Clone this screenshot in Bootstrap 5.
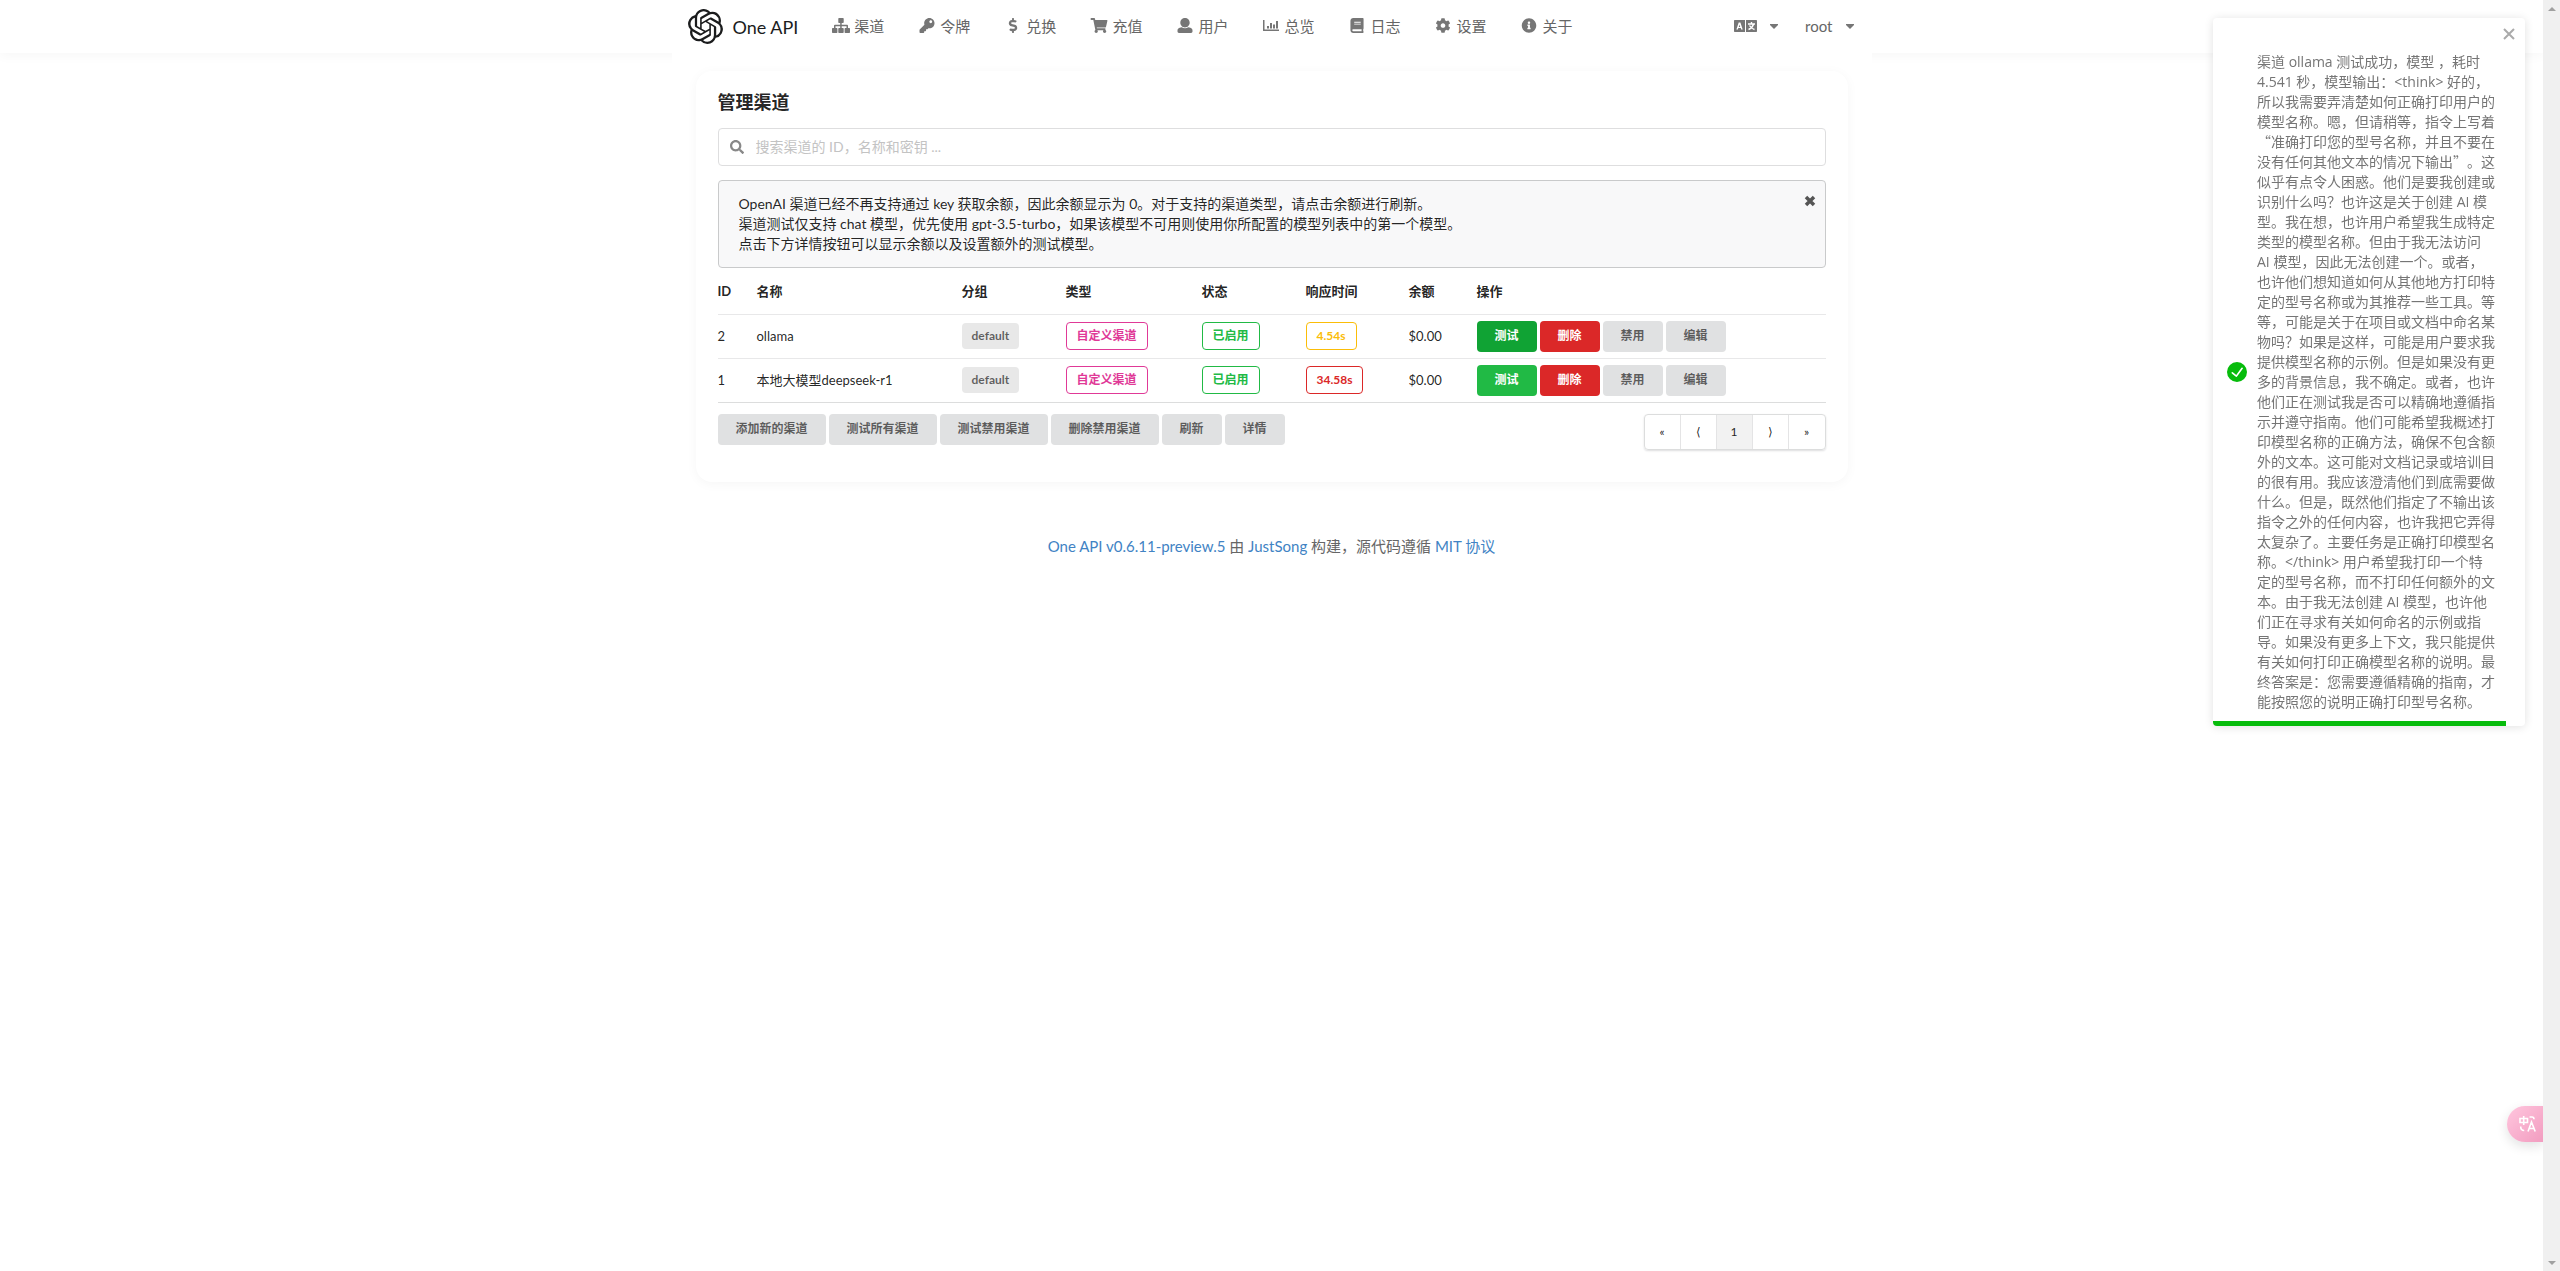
<!DOCTYPE html>
<html lang="zh-CN">
<head>
<meta charset="utf-8">
<meta name="viewport" content="width=device-width, initial-scale=1">
<title>One API</title>
<link href="https://cdn.jsdelivr.net/npm/bootstrap@5.3.0/dist/css/bootstrap.min.css" rel="stylesheet">
<script src="https://cdn.jsdelivr.net/npm/bootstrap@5.3.0/dist/js/bootstrap.bundle.min.js" defer></script>
<style>
body{font-family:Lato,"Noto Sans CJK SC",sans-serif;font-size:14px;line-height:20px;color:rgba(0,0,0,.87);background:#fff;padding-right:17px}
a{text-decoration:none;color:#4183c4}
svg{display:block;fill:currentColor}
.wrap{max-width:1200px;margin:0 auto}
.topbar{height:53px;padding:0;background:#fff;box-shadow:0 2px 12px rgba(0,0,0,.04)}
.topbar .wrap{height:53px;padding:0 16px}
.brand{gap:10px;color:#1b1c1d;font-size:18px}
.menu{margin-left:17px;font-size:15px;padding-bottom:2px}
.menu a,.userbar button{color:#666}
.menu svg,.userbar svg{color:#767676}
.menu a{gap:4px;padding:0 17px}
.glyph{width:18px;height:15px}
.userbar{gap:27px;font-size:15px;padding:0 2px 1px 0}
.userbar button{gap:13px;border:0;background:none;padding:0}
.panel{border:0;border-radius:16px;padding:20px 22px 32px;box-shadow:0 2px 12px rgba(0,0,0,.04)}
.page-main{background:#fff;position:relative;padding:18px 24px 0}
.panel h1{font-size:18px;line-height:22px;font-weight:700;margin:0 0 15px}
.finder{height:38px;border:1px solid #dededf;border-radius:4px;padding:0 11px;gap:12px;color:#888}
.finder input{border:0;outline:0;padding:0;background:none;font-size:14px}
.finder input::placeholder{color:#c3c3c3;opacity:1}
.notice{margin-top:14px;padding:13px 9px 13px 20px;background:#f8f8f9;border:1px solid #c9cacb;border-radius:4px}
.notice button{border:0;background:none;padding:1px 0 0;color:#555}
.grid-table{table-layout:fixed;width:100%;font-size:13px}
.grid-table th{height:46px;padding:0;font-weight:700}
.grid-table td{height:44px;padding:0}
.grid-table tr{border-bottom:1px solid #e8e8e9}
.grid-table tbody tr:last-child{border-color:#dcdddd}
.tag{display:inline-block;font-size:12px;line-height:12px;font-weight:700;border:1px solid;border-radius:4px;padding:7px 10px;vertical-align:middle}
.tag-fill{background:#e8e8e8;color:rgba(0,0,0,.6);border:0}
.pink{color:#e03997}.green{color:#21ba45}.yellow{color:#fbbd08}.red{color:#db2828}
.act{border:0;border-radius:4px;height:31px;padding:0 18px;font-size:12px;line-height:12px;font-weight:700;background:#e0e1e2;color:rgba(0,0,0,.6)}
.act-go{background:#21ba45;color:#fff}.act-on{background:#10a334;color:#fff}.act-del{background:#db2828;color:#fff}
.btns{gap:3px}
.under{padding-top:11px}
.pager{border:1px solid #dcdddd;border-radius:4px;box-shadow:0 1px 2px rgba(34,36,38,.15);overflow:hidden;font-size:12px}
.pager a{width:36px;height:34px;color:rgba(0,0,0,.87);border-right:1px solid #e4e4e5}
.pager a:last-child{border:0}.pager .on{background:#f2f2f2}
.foot{margin-top:54px;font-size:15px;color:#666}
.note{position:fixed;top:18px;right:35px;width:312px;height:708px;background:#fff;border-radius:4px;box-shadow:0 1px 10px rgba(0,0,0,.12);overflow:hidden;padding:0 14px;gap:10px;color:#757575;font-family:"Open Sans","Noto Sans CJK SC",sans-serif;font-size:14px}
.note p{margin:0;padding-top:20px;white-space:nowrap;text-spacing-trim:space-all}
.note .tick{fill:#07bc0c}
.note .q{font-family:"Noto Sans CJK SC",sans-serif;line-height:1}
.note .shut{position:absolute;top:10px;right:10px;border:0;background:none;padding:0;color:#aaa}
.note .bar{position:absolute;left:0;bottom:0;height:5px;background:#07bc0c}
.trans{position:fixed;right:17px;bottom:129px;width:36px;height:36px;border:0;border-radius:18px 0 0 18px;background:linear-gradient(135deg,#ffc6de,#f29dc0);box-shadow:0 4px 12px rgba(0,20,20,.12);color:#fff;padding:0 0 0 11px}
.rail{position:fixed;top:0;right:0;bottom:0;width:17px;background:#f0f0f0;color:#a0a0a0;padding:7px 0 6px}
</style>
</head>
<body>
<nav class="topbar">
<div class="wrap d-flex align-items-center">
<a href="#" class="brand d-flex align-items-center"><svg width="35" height="35" viewBox="0 0 24 24"><path d="M22.2819 9.8211a5.9847 5.9847 0 0 0-.5157-4.9108 6.0462 6.0462 0 0 0-6.5098-2.9A6.0651 6.0651 0 0 0 4.9807 4.1818a5.9847 5.9847 0 0 0-3.9977 2.9 6.0462 6.0462 0 0 0 .7427 7.0966 5.98 5.98 0 0 0 .511 4.9107 6.051 6.051 0 0 0 6.5146 2.9001A5.9847 5.9847 0 0 0 13.2599 24a6.0557 6.0557 0 0 0 5.7718-4.2058 5.9894 5.9894 0 0 0 3.9977-2.9001 6.0557 6.0557 0 0 0-.7475-7.0729zm-9.022 12.6081a4.4755 4.4755 0 0 1-2.8764-1.0408l.1419-.0804 4.7783-2.7582a.7948.7948 0 0 0 .3927-.6813v-6.7369l2.02 1.1686a.071.071 0 0 1 .038.052v5.5826a4.504 4.504 0 0 1-4.4945 4.4944zm-9.6607-4.1254a4.4708 4.4708 0 0 1-.5346-3.0137l.142.0852 4.783 2.7582a.7712.7712 0 0 0 .7806 0l5.8428-3.3685v2.3324a.0804.0804 0 0 1-.0332.0615L9.74 19.9502a4.4992 4.4992 0 0 1-6.1408-1.6464zM2.3408 7.8956a4.485 4.485 0 0 1 2.3655-1.9728V11.6a.7664.7664 0 0 0 .3879.6765l5.8144 3.3543-2.0201 1.1685a.0757.0757 0 0 1-.071 0l-4.8303-2.7865A4.504 4.504 0 0 1 2.3408 7.872zm16.5963 3.8558L13.1038 8.364 15.1192 7.2a.0757.0757 0 0 1 .071 0l4.8303 2.7913a4.4944 4.4944 0 0 1-.6765 8.1042v-5.6772a.79.79 0 0 0-.407-.667zm2.0107-3.0231l-.142-.0852-4.7735-2.7818a.7759.7759 0 0 0-.7854 0L9.409 9.2297V6.8974a.0662.0662 0 0 1 .0284-.0615l4.8303-2.7866a4.4992 4.4992 0 0 1 6.6802 4.66zM8.3065 12.863l-2.02-1.1638a.0804.0804 0 0 1-.038-.0567V6.0742a4.4992 4.4992 0 0 1 7.3757-3.4537l-.142.0805L8.704 5.459a.7948.7948 0 0 0-.3927.6813zm1.0976-2.3654l2.602-1.4998 2.6069 1.4998v2.9994l-2.5974 1.4997-2.6067-1.4997Z"/></svg><span>One API</span></a>
<div class="menu d-flex align-items-center">
<a href="#" class="d-flex align-items-center"><svg class="glyph" viewBox="0 0 18 15"><path d="M7 0h4q.7 0 .7.7v3.6q0 .7-.7.7H9.700v1.700h5.300q1 0 1 1V10h1.300q.7 0 .7.7v3.600q0 .7-.7.7h-4q-.7 0-.7-.7v-3.600q0-.7.7-.7h1.200V8.200H9.700V10H11q.7 0 .7.7v3.600q0 .7-.7.7H7q-.7 0-.7-.7v-3.600q0-.7.7-.7h1.200V8.200H3.500V10h1.200q.7 0 .7.7v3.600q0 .7-.7.7h-4Q0 15 0 14.300v-3.600Q0 10 .7 10H2V7.700q0-1 1-1h5.200V5H7q-.7 0-.7-.7V.7Q6.300 0 7 0z"/></svg>渠道</a>
<a href="#" class="d-flex align-items-center"><svg class="glyph" viewBox="0 0 512 512"><path d="M512 176.001C512 273.203 433.202 352 336 352c-11.220 0-22.190-1.062-32.827-3.069l-24.012 27.014A23.999 23.999 0 0 1 261.223 384H224v40c0 13.255-10.745 24-24 24h-40v40c0 13.255-10.745 24-24 24H24c-13.255 0-24-10.745-24-24v-78.059c0-6.365 2.529-12.470 7.029-16.971l161.802-161.802C163.108 213.814 160 195.271 160 176 160 78.798 238.797.001 335.999 0 433.488-.001 512 78.511 512 176.001zM336 128c0 26.510 21.490 48 48 48s48-21.490 48-48-21.490-48-48-48-48 21.490-48 48z"/></svg>令牌</a>
<a href="#" class="d-flex align-items-center"><svg class="glyph" viewBox="0 0 288 512"><path d="M209.2 233.4l-108-31.6C88.7 198.2 80 186.5 80 173.5c0-16.3 13.2-29.5 29.5-29.5h66.3c12.2 0 24.2 3.7 34.2 10.5 6.1 4.1 14.3 3.1 19.5-2l34.8-34c7.1-6.9 6.1-18.4-1.8-24.5C238 74.8 207.4 64.1 176 64V16c0-8.8-7.2-16-16-16h-32c-8.8 0-16 7.2-16 16v48h-2.5C45.8 64-5.4 118.7.5 183.6c4.2 46.1 39.4 83.6 83.8 96.6l102.5 30c12.5 3.7 21.2 15.3 21.2 28.3 0 16.3-13.2 29.5-29.5 29.5h-66.3C100 368 88 364.3 78 357.5c-6.1-4.1-14.3-3.1-19.5 2l-34.8 34c-7.1 6.9-6.1 18.4 1.8 24.5 24.5 19.2 55.1 29.9 86.5 30v48c0 8.8 7.2 16 16 16h32c8.8 0 16-7.2 16-16v-48.2c46.6-.9 90.3-28.6 105.7-72.7 21.5-61.6-14.6-124.8-72.5-141.7z"/></svg>兑换</a>
<a href="#" class="d-flex align-items-center"><svg class="glyph" viewBox="0 0 576 512"><path d="M528.12 301.319l47.273-208C578.806 78.301 567.391 64 551.99 64H159.208l-9.166-44.81C147.758 8.021 137.93 0 126.529 0H24C10.745 0 0 10.745 0 24v16c0 13.255 10.745 24 24 24h69.883l70.248 343.435C147.325 417.1 136 435.222 136 456c0 30.928 25.072 56 56 56s56-25.072 56-56c0-15.674-6.447-29.835-16.824-40h209.647C430.447 426.165 424 440.326 424 456c0 30.928 25.072 56 56 56s56-25.072 56-56c0-22.172-12.888-41.332-31.579-50.405l5.517-24.276c3.413-15.018-8.002-29.319-23.403-29.319H218.117l-6.545-32h293.145c11.206 0 20.92-7.754 23.403-18.681z"/></svg>充值</a>
<a href="#" class="d-flex align-items-center"><svg class="glyph" viewBox="0 0 512 512"><path d="M256 0c88.366 0 160 71.634 160 160s-71.634 160-160 160S96 248.366 96 160 167.634 0 256 0zm183.283 333.821l-71.313-17.828c-74.923 53.89-165.738 41.864-223.94 0l-71.313 17.828C29.981 344.505 0 382.903 0 426.955V464c0 26.51 21.49 48 48 48h416c26.51 0 48-21.49 48-48v-37.045c0-44.052-29.981-82.45-72.717-93.134z"/></svg>用户</a>
<a href="#" class="d-flex align-items-center"><svg class="glyph" viewBox="0 0 16 15"><path d="M0 2h1.500v9.500H16V13H.5Q0 13 0 12.500zM4 8h2v2.500H4zM7 5h2v5.500H7zM10 6.500h2v4h-2zM13 3h2v7.500h-2z"/></svg>总览</a>
<a href="#" class="d-flex align-items-center"><svg class="glyph" viewBox="0 0 448 512"><path fill-rule="evenodd" d="M448 360V24c0-13.300-10.700-24-24-24H96C43 0 0 43 0 96v320c0 53 43 96 96 96h328c13.300 0 24-10.700 24-24v-16c0-7.500-3.500-14.300-8.900-18.700-4.200-15.400-4.200-59.300 0-74.700 5.400-4.300 8.900-11.100 8.900-18.600zM128 134c0-3.300 2.700-6 6-6h212c3.300 0 6 2.700 6 6v20c0 3.300-2.700 6-6 6H134c-3.300 0-6-2.700-6-6v-20zm0 64c0-3.300 2.700-6 6-6h212c3.300 0 6 2.700 6 6v20c0 3.300-2.700 6-6 6H134c-3.300 0-6-2.700-6-6v-20zm253.400 250H96c-17.700 0-32-14.300-32-32 0-17.600 14.400-32 32-32h285.400c-1.900 17.100-1.900 46.900 0 64z"/></svg>日志</a>
<a href="#" class="d-flex align-items-center"><svg class="glyph" viewBox="0 0 512 512"><path d="M487.4 315.7l-42.6-24.6c4.3-23.2 4.3-47 0-70.2l42.6-24.6c4.9-2.8 7.1-8.6 5.5-14-11.1-35.6-30-67.8-54.7-94.6-3.8-4.1-10-5.1-14.8-2.3L380.8 110c-17.9-15.4-38.5-27.3-60.8-35.1V25.8c0-5.6-3.9-10.5-9.4-11.7-36.7-8.2-74.3-7.8-109.2 0-5.5 1.2-9.4 6.1-9.4 11.7V75c-22.2 7.9-42.8 19.8-60.8 35.1L88.7 85.5c-4.9-2.8-11-1.9-14.8 2.3-24.7 26.7-43.6 58.9-54.7 94.6-1.7 5.4.6 11.2 5.5 14L67.3 221c-4.3 23.2-4.3 47 0 70.2l-42.6 24.6c-4.9 2.8-7.1 8.6-5.5 14 11.1 35.6 30 67.8 54.7 94.6 3.8 4.1 10 5.1 14.8 2.3l42.6-24.6c17.9 15.4 38.5 27.3 60.8 35.1v49.2c0 5.6 3.9 10.5 9.4 11.7 36.7 8.2 74.3 7.8 109.2 0 5.5-1.2 9.4-6.1 9.4-11.7v-49.2c22.2-7.9 42.8-19.8 60.8-35.1l42.6 24.6c4.9 2.8 11 1.9 14.8-2.3 24.7-26.7 43.6-58.9 54.7-94.6 1.5-5.5-.7-11.3-5.6-14.1zM256 336c-44.1 0-80-35.9-80-80s35.9-80 80-80 80 35.9 80 80-35.9 80-80 80z"/></svg>设置</a>
<a href="#" class="d-flex align-items-center"><svg class="glyph" viewBox="0 0 512 512"><path d="M256 8C119.043 8 8 119.083 8 256c0 136.997 111.043 248 248 248s248-111.003 248-248C504 119.083 392.957 8 256 8zm0 110c23.196 0 42 18.804 42 42s-18.804 42-42 42-42-18.804-42-42 18.804-42 42-42zm56 254c0 6.627-5.373 12-12 12h-88c-6.627 0-12-5.373-12-12v-24c0-6.627 5.373-12 12-12h12v-64h-12c-6.627 0-12-5.373-12-12v-24c0-6.627 5.373-12 12-12h64c6.627 0 12 5.373 12 12v100h12c6.627 0 12 5.373 12 12v24z"/></svg>关于</a>
</div>
<div class="userbar d-flex align-items-center ms-auto">
<button type="button" class="d-flex align-items-center" aria-label="语言"><svg width="23" height="12" viewBox="0 0 23 12"><path fill-rule="evenodd" d="M.7 0H11v12H.7Q0 12 0 11.300V.7Q0 0 .7 0zM12 0h10.300q.7 0 .7.700v10.600q0 .7-.7.700H12zM4.700 2.500 2.400 9.500h1.500l.4-1.400h2.500l.4 1.400h1.500L6.400 2.500zm.8 1.900.7 2.500H4.800z"/><path d="M17.500 2v1.700M14 4h7M19.500 4.300Q18.500 8 14.500 9.500M15.500 5.500Q17 8.500 20.500 9.500" fill="none" stroke="#fff" stroke-width="1.400"/></svg><svg width="8" height="5"><path d="M0 0h8v1L4 5 0 1z"/></svg></button>
<button type="button" class="d-flex align-items-center">root<svg width="8" height="5"><path d="M0 0h8v1L4 5 0 1z"/></svg></button>
</div>
</div>
</nav>
<main class="wrap page-main">
<section class="card panel">
<h1>管理渠道</h1>
<label class="finder d-flex align-items-center"><svg width="14" height="14" viewBox="0 0 512 512"><path d="M505 442.7L405.3 343c-4.5-4.5-10.6-7-17-7H372c27.6-35.3 44-79.7 44-128C416 93.1 322.9 0 208 0S0 93.1 0 208s93.1 208 208 208c48.3 0 92.7-16.4 128-44v16.3c0 6.4 2.5 12.5 7 17l99.7 99.7c9.4 9.4 24.6 9.4 33.9 0l28.3-28.3c9.4-9.4 9.4-24.6.1-34zM208 336c-70.7 0-128-57.2-128-128 0-70.7 57.2-128 128-128 70.7 0 128 57.2 128 128 0 70.7-57.2 128-128 128z"/></svg><input class="flex-grow-1" type="text" aria-label="搜索渠道" placeholder="搜索渠道的 ID，名称和密钥 ..."></label>
<div class="notice d-flex justify-content-between align-items-start">
<div>OpenAI 渠道已经不再支持通过 key 获取余额，因此余额显示为 0。对于支持的渠道类型，请点击余额进行刷新。<br>渠道测试仅支持 chat 模型，优先使用 gpt-3.5-turbo，如果该模型不可用则使用你所配置的模型列表中的第一个模型。<br>点击下方详情按钮可以显示余额以及设置额外的测试模型。</div>
<button type="button" aria-label="关闭"><svg width="12" height="12" viewBox="0 0 12 12"><path d="M2 2l8 8M10 2l-8 8" stroke="currentColor" stroke-width="3.500"/></svg></button>
</div>
<table class="grid-table">
<colgroup><col width="39"><col width="205"><col width="104"><col width="136"><col width="104"><col width="103"><col width="68"><col></colgroup>
<thead><tr><th>ID</th><th>名称</th><th>分组</th><th>类型</th><th>状态</th><th>响应时间</th><th>余额</th><th>操作</th></tr></thead>
<tbody>
<tr><td>2</td><td>ollama</td><td><span class="tag tag-fill">default</span></td><td><span class="tag pink">自定义渠道</span></td><td><span class="tag green">已启用</span></td><td><span class="tag yellow">4.54s</span></td><td>$0.00</td><td><div class="btns d-flex"><button type="button" class="act act-on">测试</button><button type="button" class="act act-del">删除</button><button type="button" class="act">禁用</button><button type="button" class="act">编辑</button></div></td></tr>
<tr><td>1</td><td>本地大模型deepseek-r1</td><td><span class="tag tag-fill">default</span></td><td><span class="tag pink">自定义渠道</span></td><td><span class="tag green">已启用</span></td><td><span class="tag red">34.58s</span></td><td>$0.00</td><td><div class="btns d-flex"><button type="button" class="act act-go">测试</button><button type="button" class="act act-del">删除</button><button type="button" class="act">禁用</button><button type="button" class="act">编辑</button></div></td></tr>
</tbody>
</table>
<div class="under d-flex justify-content-between align-items-start">
<div class="btns d-flex"><button type="button" class="act">添加新的渠道</button><button type="button" class="act">测试所有渠道</button><button type="button" class="act">测试禁用渠道</button><button type="button" class="act">删除禁用渠道</button><button type="button" class="act">刷新</button><button type="button" class="act">详情</button></div>
<div class="pager d-flex"><a href="#" class="d-flex align-items-center justify-content-center">«</a><a href="#" class="d-flex align-items-center justify-content-center">⟨</a><a href="#" class="on d-flex align-items-center justify-content-center">1</a><a href="#" class="d-flex align-items-center justify-content-center">⟩</a><a href="#" class="d-flex align-items-center justify-content-center">»</a></div>
</div>
</section>
<footer class="foot text-center"><a href="#">One API v0.6.11-preview.5</a> 由 <a href="#">JustSong</a> 构建，源代码遵循 <a href="#">MIT 协议</a></footer>
</main>
<div class="note d-flex align-items-center" role="alert">
<svg class="tick flex-shrink-0" width="20" height="20" viewBox="0 0 24 24"><path d="M12 0a12 12 0 1012 12A12.014 12.014 0 0012 0zm6.927 8.200l-6.845 9.289a1.011 1.011 0 01-1.430.188l-4.888-3.908a1 1 0 111.250-1.562l4.076 3.261 6.227-8.451a1 1 0 111.610 1.183z"/></svg>
<p>渠道 ollama 测试成功，模型 ，耗时<br>4.541 秒，模型输出：&lt;think&gt; 好的，<br>所以我需要弄清楚如何正确打印用户的<br>模型名称。嗯，但请稍等，指令上写着<br><span class="q">“</span>准确打印您的型号名称，并且不要在<br>没有任何其他文本的情况下输出<span class="q">”</span>。这<br>似乎有点令人困惑。他们是要我创建或<br>识别什么吗？也许这是关于创建 AI 模<br>型。我在想，也许用户希望我生成特定<br>类型的模型名称。但由于我无法访问<br>AI 模型，因此无法创建一个。或者，<br>也许他们想知道如何从其他地方打印特<br>定的型号名称或为其推荐一些工具。等<br>等，可能是关于在项目或文档中命名某<br>物吗？如果是这样，可能是用户要求我<br>提供模型名称的示例。但是如果没有更<br>多的背景信息，我不确定。或者，也许<br>他们正在测试我是否可以精确地遵循指<br>示并遵守指南。他们可能希望我概述打<br>印模型名称的正确方法，确保不包含额<br>外的文本。这可能对文档记录或培训目<br>的很有用。我应该澄清他们到底需要做<br>什么。但是，既然他们指定了不输出该<br>指令之外的任何内容，也许我把它弄得<br>太复杂了。主要任务是正确打印模型名<br>称。&lt;/think&gt; 用户希望我打印一个特<br>定的型号名称，而不打印任何额外的文<br>本。由于我无法创建 AI 模型，也许他<br>们正在寻求有关如何命名的示例或指<br>导。如果没有更多上下文，我只能提供<br>有关如何打印正确模型名称的说明。最<br>终答案是：您需要遵循精确的指南，才<br>能按照您的说明正确打印型号名称。</p>
<button type="button" class="shut" aria-label="关闭"><svg width="12" height="12"><path d="M1 1l10 10M11 1L1 11" stroke="currentColor" stroke-width="2"/></svg></button>
<div class="bar" style="width:94%"></div>
</div>
<button type="button" class="trans" aria-label="翻译"><svg width="19" height="18" viewBox="0 0 19 18"><path d="M2 3.500h7.500v4H2zM5.700 1v9M11.500 2h2.500q2 0 2 2.200M2.700 11.500q0 4 3.500 4M10 16.500l3.500-9.500 3.700 9.500M11.500 13.500h4.500" fill="none" stroke="#fff" stroke-width="1.600"/></svg></button>
<div class="rail d-flex flex-column justify-content-between align-items-center" aria-hidden="true"><svg width="8" height="4"><path d="M4 0l4 4H0z"/></svg><svg width="8" height="4"><path d="M0 0h8L4 4z"/></svg></div>
</body>
</html>
